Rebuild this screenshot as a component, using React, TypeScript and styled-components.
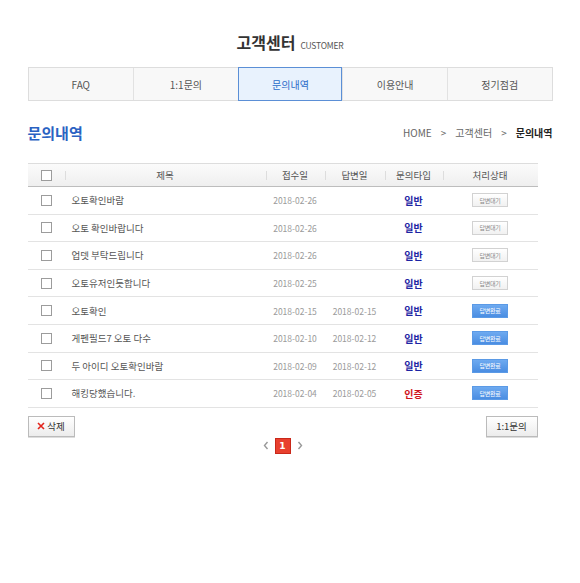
import styled, { createGlobalStyle } from "styled-components";

const GlobalStyle = createGlobalStyle`
  body {
    margin: 0;
    background: #fff;
    font-family: "Noto Sans CJK KR", "Noto Sans", sans-serif;
  }
`;

type Inquiry = {
  title: string;
  asked: string;
  answered?: string;
  kind: "일반" | "인증";
  done: boolean;
};

const rows: Inquiry[] = [
  { title: "오토확인바람", asked: "2018-02-26", kind: "일반", done: false },
  { title: "오토 확인바랍니다", asked: "2018-02-26", kind: "일반", done: false },
  { title: "업뎃 부탁드립니다", asked: "2018-02-26", kind: "일반", done: false },
  { title: "오토유저인듯합니다", asked: "2018-02-25", kind: "일반", done: false },
  { title: "오토확인", asked: "2018-02-15", answered: "2018-02-15", kind: "일반", done: true },
  { title: "게펜필드7 오토 다수", asked: "2018-02-10", answered: "2018-02-12", kind: "일반", done: true },
  { title: "두 아이디 오토확인바람", asked: "2018-02-09", answered: "2018-02-12", kind: "일반", done: true },
  { title: "해킹당했습니다.", asked: "2018-02-04", answered: "2018-02-05", kind: "인증", done: true },
];

const tabs = ["FAQ", "1:1문의", "문의내역", "이용안내", "정기점검"];

const Page = styled.div`
  width: 525px;
  margin: 0 auto;
  padding-top: 30px;
`;

const Heading = styled.h1`
  margin: 0;
  height: 24px;
  display: flex;
  justify-content: center;
  align-items: baseline;
  gap: 5px;
  font-size: 16px;
  font-weight: 700;
  color: #333;
  line-height: 24px;
`;

const HeadingSub = styled.span`
  font-size: 8.5px;
  font-weight: 400;
  color: #555;
  letter-spacing: -0.2px;
`;

const TabBar = styled.nav`
  margin-top: 13px;
  display: grid;
  grid-template-columns: repeat(5, 1fr);
  height: 34px;
  border: 1px solid #ddd;
  box-sizing: border-box;
  background: #f8f8f8;
`;

const Tab = styled.div<{ $active?: boolean }>`
  display: flex;
  align-items: center;
  justify-content: center;
  font-size: 10px;
  color: ${(p) => (p.$active ? "#2a6cc9" : "#555")};
  background: ${(p) => (p.$active ? "#e8f2fd" : "transparent")};
  border-left: 1px solid #e2e2e2;
  margin: ${(p) => (p.$active ? "-1px 0" : "0")};
  outline: ${(p) => (p.$active ? "1px solid #5b8fd6" : "none")};
  outline-offset: -1px;
  &:first-child {
    border-left: none;
  }
`;

const SectionHead = styled.div`
  margin-top: 20px;
  display: flex;
  justify-content: space-between;
  align-items: center;
  height: 22px;
`;

const SectionTitle = styled.h2`
  margin: 0;
  font-size: 15px;
  font-weight: 700;
  color: #2a62c2;
`;

const Crumbs = styled.div`
  display: flex;
  gap: 9px;
  font-size: 10px;
  color: #666;
`;

const Crumb = styled.span<{ $current?: boolean }>`
  color: ${(p) => (p.$current ? "#222" : "#666")};
  font-weight: ${(p) => (p.$current ? 700 : 400)};
`;

const Table = styled.div`
  margin-top: 20px;
  width: 510px;
`;

const cols = "37px 201px 59px 60px 58px 95px";

const HeadRow = styled.div`
  display: grid;
  grid-template-columns: ${cols};
  height: 24px;
  box-sizing: border-box;
  border-top: 1px solid #ddd;
  border-bottom: 1px solid #bdbdbd;
  background: linear-gradient(#fbfbfb, #efefef);
`;

const HeadCell = styled.div<{ $sep?: boolean }>`
  display: flex;
  align-items: center;
  justify-content: center;
  font-size: 9.5px;
  color: #555;
  position: relative;
  &::before {
    content: "";
    display: ${(p) => (p.$sep ? "block" : "none")};
    position: absolute;
    left: 0;
    top: 7px;
    height: 9px;
    border-left: 1px solid #ddd;
  }
`;

const Row = styled.div`
  display: grid;
  grid-template-columns: ${cols};
  height: 27.6px;
  box-sizing: border-box;
  border-bottom: 1px solid #e3e3e3;
`;

const Cell = styled.div<{ $align?: "left" | "center" }>`
  display: flex;
  align-items: center;
  justify-content: ${(p) => (p.$align === "left" ? "flex-start" : "center")};
  padding-left: ${(p) => (p.$align === "left" ? "7px" : "0")};
  font-size: 9.5px;
  color: #555;
`;

const DateText = styled.span`
  font-size: 8.5px;
  color: #9a9a9a;
`;

const Kind = styled.span<{ $auth?: boolean }>`
  font-size: 10px;
  font-weight: 700;
  color: ${(p) => (p.$auth ? "#d0141b" : "#1d24a3")};
`;

const Check = styled.span`
  width: 9px;
  height: 9px;
  border: 1px solid #9c9c9c;
  background: #fff;
`;

const Badge = styled.span<{ $done?: boolean }>`
  width: 36px;
  height: 14px;
  box-sizing: border-box;
  display: flex;
  align-items: center;
  justify-content: center;
  font-size: 6px;
  letter-spacing: -0.3px;
  color: ${(p) => (p.$done ? "#fff" : "#888")};
  border: 1px solid ${(p) => (p.$done ? "#5b9ae6" : "#d2d2d2")};
  background: ${(p) =>
    p.$done ? "linear-gradient(#6eaaf0, #4a8de2)" : "linear-gradient(#fff, #f1f1f1)"};
`;

const Actions = styled.div`
  width: 510px;
  margin-top: 8px;
  display: flex;
  justify-content: space-between;
`;

const Button = styled.button<{ $wide?: number }>`
  width: ${(p) => p.$wide ?? 47}px;
  height: 21px;
  display: flex;
  align-items: center;
  justify-content: center;
  gap: 2px;
  padding: 0;
  border: 1px solid #bbb;
  background: linear-gradient(#fff, #ececec);
  font-family: inherit;
  font-size: 9.5px;
  color: #333;
  box-shadow: 0 1px 0 #ddd;
`;

const Pager = styled.div`
  width: 510px;
  display: flex;
  justify-content: center;
  align-items: center;
  gap: 6px;
  margin-top: 1px;
`;

const PageNum = styled.span`
  width: 16px;
  height: 16px;
  box-sizing: border-box;
  display: flex;
  align-items: center;
  justify-content: center;
  background: #e8402e;
  border: 1px solid #c9281a;
  color: #fff;
  font-family: "DejaVu Sans", sans-serif;
  font-weight: 700;
  font-size: 9px;
`;

function CrossIcon() {
  return (
    <svg width="8" height="8" viewBox="0 0 8 8">
      <path d="M1 1L7 7M7 1L1 7" stroke="#e3241b" strokeWidth="1.6" />
    </svg>
  );
}

function Chevron({ dir }: { dir: "left" | "right" }) {
  return (
    <svg width="6" height="9" viewBox="0 0 6 9">
      <path
        d={dir === "left" ? "M4.5 1L1.5 4.5L4.5 8" : "M1.5 1L4.5 4.5L1.5 8"}
        stroke="#999"
        strokeWidth="1.4"
        fill="none"
      />
    </svg>
  );
}

export default function App() {
  return (
    <>
      <GlobalStyle />
      <Page>
        <Heading>
          고객센터 <HeadingSub>CUSTOMER</HeadingSub>
        </Heading>
        <TabBar>
          {tabs.map((t) => (
            <Tab key={t} $active={t === "문의내역"}>
              {t}
            </Tab>
          ))}
        </TabBar>
        <SectionHead>
          <SectionTitle>문의내역</SectionTitle>
          <Crumbs>
            <Crumb>HOME</Crumb>
            <Crumb>&gt;</Crumb>
            <Crumb>고객센터</Crumb>
            <Crumb>&gt;</Crumb>
            <Crumb $current>문의내역</Crumb>
          </Crumbs>
        </SectionHead>
        <Table>
          <HeadRow>
            <HeadCell>
              <Check />
            </HeadCell>
            <HeadCell $sep>제목</HeadCell>
            <HeadCell $sep>접수일</HeadCell>
            <HeadCell $sep>답변일</HeadCell>
            <HeadCell $sep>문의타입</HeadCell>
            <HeadCell $sep>처리상태</HeadCell>
          </HeadRow>
          {rows.map((r) => (
            <Row key={r.title}>
              <Cell>
                <Check />
              </Cell>
              <Cell $align="left">{r.title}</Cell>
              <Cell>
                <DateText>{r.asked}</DateText>
              </Cell>
              <Cell>
                <DateText>{r.answered ?? ""}</DateText>
              </Cell>
              <Cell>
                <Kind $auth={r.kind === "인증"}>{r.kind}</Kind>
              </Cell>
              <Cell>
                <Badge $done={r.done}>{r.done ? "답변완료" : "답변대기"}</Badge>
              </Cell>
            </Row>
          ))}
        </Table>
        <Actions>
          <Button>
            <CrossIcon />
            삭제
          </Button>
          <Button $wide={52}>1:1문의</Button>
        </Actions>
        <Pager>
          <Chevron dir="left" />
          <PageNum>1</PageNum>
          <Chevron dir="right" />
        </Pager>
      </Page>
    </>
  );
}
